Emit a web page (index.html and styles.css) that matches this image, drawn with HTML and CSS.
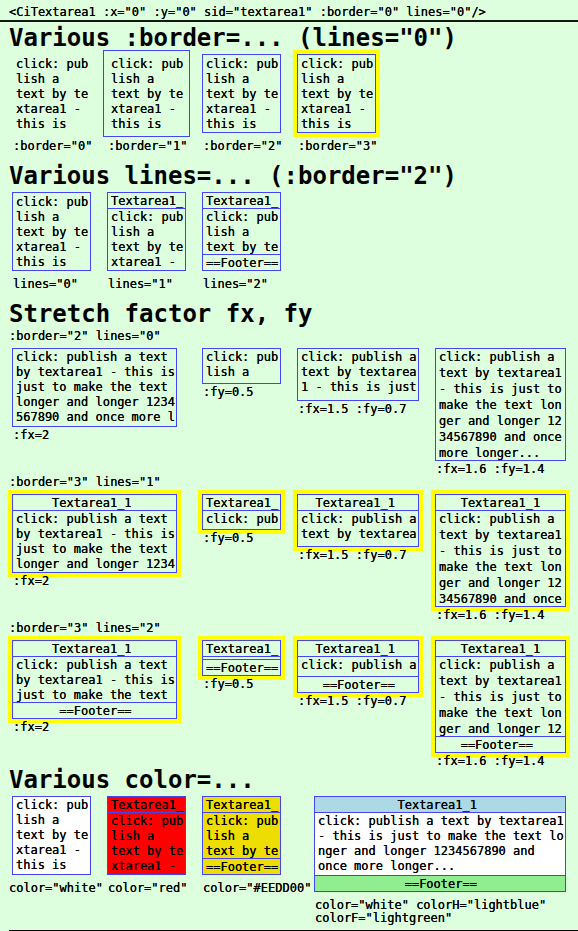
FILE: index.html
```html
<!DOCTYPE html>
<html lang="en">
<head>
<meta charset="utf-8">
<title>CiTextarea1</title>
<link rel="stylesheet" href="styles.css">
</head>
<body>
<header class="usage"><code>&lt;CiTextarea1 :x="0" :y="0" sid="textarea1" :border="0" lines="0"/&gt;</code></header>
<main>
<section>
<h2>Various :border=... (lines="0")</h2>
<div class="row row-even">
<figure><div class="box b0"><pre class="text">click: pub
lish a
text by te
xtarea1 -
this is</pre></div><figcaption>:border="0"</figcaption></figure>
<figure><div class="box b1"><pre class="text">click: pub
lish a
text by te
xtarea1 -
this is</pre></div><figcaption>:border="1"</figcaption></figure>
<figure><div class="box"><pre class="text">click: pub
lish a
text by te
xtarea1 -
this is</pre></div><figcaption>:border="2"</figcaption></figure>
<figure><div class="box b3"><pre class="text">click: pub
lish a
text by te
xtarea1 -
this is</pre></div><figcaption>:border="3"</figcaption></figure>
</div>
</section>

<section>
<h2>Various lines=... (:border="2")</h2>
<div class="row row-even">
<figure><div class="box"><pre class="text">click: pub
lish a
text by te
xtarea1 -
this is</pre></div><figcaption>lines="0"</figcaption></figure>
<figure><div class="box"><pre class="head">Textarea1_</pre><pre class="text">click: pub
lish a
text by te
xtarea1 -</pre></div><figcaption>lines="1"</figcaption></figure>
<figure><div class="box"><pre class="head">Textarea1_</pre><pre class="text">click: pub
lish a
text by te</pre><pre class="foot">==Footer==</pre></div><figcaption>lines="2"</figcaption></figure>
</div>
</section>

<section>
<h2>Stretch factor fx, fy</h2>
<h3>:border="2" lines="0"</h3>
<div class="row row-stretch">
<figure><div class="box fx20"><pre class="text">click: publish a text
by textarea1 - this is
just to make the text
longer and longer 1234
567890 and once more l</pre></div><figcaption>:fx=2</figcaption></figure>
<figure><div class="box fy05"><pre class="text">click: pub
lish a</pre></div><figcaption>:fy=0.5</figcaption></figure>
<figure><div class="box fx15 fy07"><pre class="text">click: publish a
text by textarea
1 - this is just</pre></div><figcaption>:fx=1.5 :fy=0.7</figcaption></figure>
<figure><div class="box fx16 fy14"><pre class="text">click: publish a
text by textarea1
- this is just to
make the text lon
ger and longer 12
34567890 and once
more longer...</pre></div><figcaption>:fx=1.6 :fy=1.4</figcaption></figure>
</div>
<h3>:border="3" lines="1"</h3>
<div class="row row-stretch">
<figure><div class="box b3 fx20"><pre class="head">     Textarea1_1</pre><pre class="text">click: publish a text
by textarea1 - this is
just to make the text
longer and longer 1234</pre></div><figcaption>:fx=2</figcaption></figure>
<figure><div class="box b3 fy05"><pre class="head">Textarea1_</pre><pre class="text">click: pub</pre></div><figcaption>:fy=0.5</figcaption></figure>
<figure><div class="box b3 fx15 fy07"><pre class="head">  Textarea1_1</pre><pre class="text">click: publish a
text by textarea</pre></div><figcaption>:fx=1.5 :fy=0.7</figcaption></figure>
<figure><div class="box b3 fx16 fy14"><pre class="head">   Textarea1_1</pre><pre class="text">click: publish a
text by textarea1
- this is just to
make the text lon
ger and longer 12
34567890 and once</pre></div><figcaption>:fx=1.6 :fy=1.4</figcaption></figure>
</div>
<h3>:border="3" lines="2"</h3>
<div class="row row-stretch">
<figure><div class="box b3 fx20"><pre class="head">     Textarea1_1</pre><pre class="text">click: publish a text
by textarea1 - this is
just to make the text</pre><pre class="foot">      ==Footer==</pre></div><figcaption>:fx=2</figcaption></figure>
<figure><div class="box b3 fy05"><pre class="head">Textarea1_</pre><pre class="text"></pre><pre class="foot">==Footer==</pre></div><figcaption>:fy=0.5</figcaption></figure>
<figure><div class="box b3 fx15 fy07"><pre class="head">  Textarea1_1</pre><pre class="text">click: publish a</pre><pre class="foot">   ==Footer==</pre></div><figcaption>:fx=1.5 :fy=0.7</figcaption></figure>
<figure><div class="box b3 fx16 fy14"><pre class="head">   Textarea1_1</pre><pre class="text">click: publish a
text by textarea1
- this is just to
make the text lon
ger and longer 12</pre><pre class="foot">   ==Footer==</pre></div><figcaption>:fx=1.6 :fy=1.4</figcaption></figure>
</div>
</section>

<section class="colors">
<h2>Various color=...</h2>
<div class="row row-color">
<figure><div class="box white"><pre class="text">click: pub
lish a
text by te
xtarea1 -
this is</pre></div><figcaption class="outdent">color="white"</figcaption></figure>
<figure><div class="box red"><pre class="head">Textarea1_</pre><pre class="text">click: pub
lish a
text by te
xtarea1 -</pre></div><figcaption>color="red"</figcaption></figure>
<figure><div class="box gold"><pre class="head">Textarea1_</pre><pre class="text">click: pub
lish a
text by te</pre><pre class="foot">==Footer==</pre></div><figcaption>color="#EEDD00"</figcaption></figure>
<figure><div class="box white wide"><pre class="head lightblue">           Textarea1_1</pre><pre class="text">click: publish a text by textarea1
- this is just to make the text lo
nger and longer 1234567890 and
once more longer...</pre><pre class="foot lightgreen">            ==Footer==</pre></div><figcaption>color="white" colorH="lightblue"<br>colorF="lightgreen"</figcaption></figure>
</div>
</section>
</main>
<hr>
</body>
</html>
```
FILE: styles.css
```css
* {
  box-sizing: border-box;
}

body {
  margin: 0;
  background: #ddffdd;
  color: #000;
  font: 12px/13px "DejaVu Sans Mono", monospace;
  text-shadow: 0 0 0 #000;
}

code,
pre {
  margin: 0;
  font-family: inherit;
  font-size: inherit;
}

.usage {
  padding: 6px 9px 1px;
  border-bottom: 2px solid #101810;
}

main {
  display: flex;
  flex-direction: column;
  gap: 11px;
  padding: 4px 0 0 9px;
}

h2 {
  margin: 0 0 4px;
  font-size: 24px;
  font-weight: bold;
  line-height: 24px;
  white-space: nowrap;
  text-shadow: none;
}

h3 {
  margin: 0 0 5px;
  font-size: 12px;
  font-weight: normal;
  line-height: 13px;
}

.row {
  display: grid;
  align-items: start;
  padding-left: 3px;
}

.row-even {
  grid-template-columns: repeat(4, 95px);
}

.row-stretch {
  grid-template-columns: 190px 95px 138px auto;
}

.row-color {
  grid-template-columns: 95px 95px 112px auto;
}

figure {
  margin: 0;
}

figcaption {
  margin-top: 7px;
  padding-left: 1px;
  white-space: nowrap;
}

.row-stretch figcaption {
  margin-top: 2px;
}

.outdent {
  margin-left: -4px;
}

.colors {
  margin-top: -11px;
}

/* Text boxes: optional header, text, optional footer */
.box {
  display: flex;
  flex-direction: column;
  width: 79px;
  height: 79px;
  border: 1px solid #4444f0;
}

.b0 {
  border-color: transparent;
}

.b1 {
  border-color: transparent;
  outline: 1px solid #4444f0;
  outline-offset: 3px;
}

.b3 {
  box-shadow: 0 0 0 4px #ffff00;
}

.text,
.head,
.foot {
  padding-left: 3px;
}

.text {
  flex: 1;
  min-height: 0;
  padding-top: 1px;
  line-height: 15px;
}

.row-even .text:first-child {
  padding-top: 2px;
}

.fy14 .text {
  padding-top: 0;
  line-height: 16px;
}

.head,
.foot {
  flex: none;
  height: 16px;
  line-height: 16px;
}

.head {
  border-bottom: 1px solid #4444f0;
}

.foot {
  border-top: 1px solid #4444f0;
}

.fx15 { width: 122px; }
.fx16 { width: 131px; }
.fx20 { width: 165px; }
.wide { width: 252px; height: 96px; }

.fy05 { height: 36px; }
.fy07 { height: 53px; }
.fy14 { height: 113px; }

.white { background: #fff; }
.red { background: #f00; }
.gold { background: #eedd00; }
.lightblue { background: lightblue; }
.lightgreen { background: lightgreen; }

hr {
  margin: 5px 0 0 9px;
  border: 0;
  border-top: 1px solid #000;
}
```
